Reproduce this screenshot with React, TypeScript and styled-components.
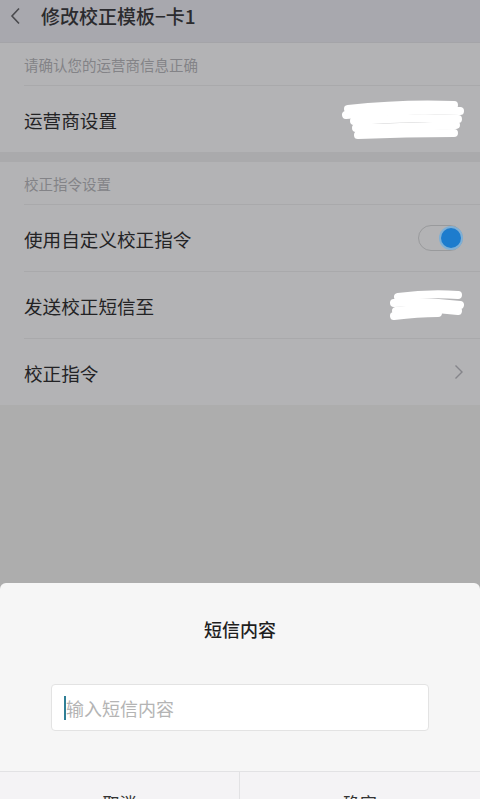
import React from 'react'
import styled, { createGlobalStyle } from 'styled-components'

const GlobalStyle = createGlobalStyle`
  html, body {
    margin: 0;
    padding: 0;
    background: #adadad;
  }
  body {
    font-family: "Noto Sans CJK SC", "Noto Sans", sans-serif;
  }
`

const Page = styled.div`
  width: 480px;
  height: 799px;
  overflow: hidden;
  display: flex;
  flex-direction: column;
  background: #adadad;
`

const Header = styled.header`
  height: 43px;
  flex-shrink: 0;
  display: flex;
  align-items: center;
  background: #a8a8ae;
  border-bottom: 1px solid #a4a4a8;
  box-sizing: border-box;
`

const Back = styled.div`
  width: 41px;
  height: 43px;
  display: flex;
  align-items: center;
  padding-left: 10px;
  box-sizing: border-box;
  margin-top: -10px;
`

const Title = styled.h1`
  margin: -10px 0 0 0;
  font-size: 19px;
  font-weight: 500;
  color: #2b2b2e;
  line-height: 24px;
`

const List = styled.div`
  flex-shrink: 0;
  background: #b3b3b5;
`

const SectionLabel = styled.div`
  height: 42px;
  padding-left: 24px;
  display: flex;
  align-items: center;
  font-size: 14.5px;
  color: #838387;
`

const Gap = styled.div`
  height: 10px;
  background: #aaaaac;
`

const Row = styled.div<{ $divider?: boolean }>`
  height: 66px;
  margin-left: 24px;
  padding-right: 16px;
  display: flex;
  align-items: center;
  justify-content: space-between;
  border-top: ${(p) => (p.$divider ? '1px solid #a9a9ab' : 'none')};
  font-size: 18.6px;
  color: #232325;
`

const Toggle = styled.div`
  width: 45px;
  height: 26px;
  border-radius: 13px;
  border: 1px solid #999a9c;
  box-sizing: border-box;
  display: flex;
  align-items: center;
  justify-content: flex-end;
  padding-right: 1px;
  margin-right: 1px;
`

const Knob = styled.div`
  width: 20px;
  height: 20px;
  border-radius: 50%;
  background: #1d7ccd;
  box-shadow: 0 0 0 2px #7fb0d6;
`

const Filler = styled.div`
  height: 178px;
  flex-shrink: 0;
  background: #adadad;
`

const Dialog = styled.div`
  flex-shrink: 0;
  background: #f6f6f6;
  border-radius: 6px 6px 0 0;
  display: flex;
  flex-direction: column;
  align-items: center;
`

const DialogTitle = styled.div`
  margin-top: 34px;
  font-size: 18px;
  line-height: 24px;
  font-weight: 500;
  color: #1e1e1e;
`

const InputBox = styled.div`
  margin-top: 43px;
  width: 378px;
  height: 47px;
  background: #ffffff;
  border: 1px solid #e3e3e3;
  border-radius: 4px;
  box-sizing: border-box;
  display: flex;
  align-items: center;
  padding-left: 12px;
`

const Caret = styled.span`
  width: 2px;
  height: 24px;
  background: #2f7f96;
`

const Placeholder = styled.span`
  font-size: 18px;
  color: #b4b4b4;
`

const Buttons = styled.div`
  margin-top: 40px;
  width: 100%;
  height: 60px;
  display: grid;
  grid-template-columns: 1fr 1fr;
  border-top: 1px solid #e2e2e4;
  background: #f4f3f5;
`

const Button = styled.div<{ $left?: boolean }>`
  display: flex;
  align-items: center;
  justify-content: center;
  font-size: 17px;
  color: #333;
  border-right: ${(p) => (p.$left ? '1px solid #e2e2e4' : 'none')};
`

const Scribble: React.FC<{ w: number; h: number; lines: string[] }> = ({ w, h, lines }) => (
  <svg width={w} height={h} viewBox={`0 0 ${w} ${h}`}>
    {lines.map((d, i) => (
      <path key={i} d={d} stroke="#ffffff" strokeWidth={8} strokeLinecap="round" fill="none" />
    ))}
  </svg>
)

const App: React.FC = () => {
  return (
    <Page>
      <GlobalStyle />
      <Header>
        <Back>
          <svg width="12" height="18" viewBox="0 0 12 18">
            <path d="M9 1.5 L2 9 L9 16.5" stroke="#4a4a4e" strokeWidth="1.6" fill="none" />
          </svg>
        </Back>
        <Title>修改校正模板−卡1</Title>
      </Header>
      <List>
        <SectionLabel>请确认您的运营商信息正确</SectionLabel>
        <Row $divider>
          运营商设置
          <Scribble
            w={122}
            h={44}
            lines={[
              'M6 12 Q60 6 112 8',
              'M4 18 Q70 12 118 14',
              'M12 24 Q66 20 116 22',
              'M14 31 Q70 30 114 28',
              'M16 38 Q64 36 112 36',
            ]}
          />
        </Row>
        <Gap />
        <SectionLabel>校正指令设置</SectionLabel>
        <Row $divider>
          使用自定义校正指令
          <Toggle>
            <Knob />
          </Toggle>
        </Row>
        <Row $divider>
          发送校正短信至
          <Scribble
            w={76}
            h={32}
            lines={['M10 8 Q40 4 70 6', 'M6 14 Q40 12 72 16', 'M8 22 Q38 18 70 22', 'M6 27 Q30 24 50 24']}
          />
        </Row>
        <Row $divider>
          校正指令
          <svg width="10" height="16" viewBox="0 0 10 16">
            <path d="M1.5 1.5 L8 8 L1.5 14.5" stroke="#85858a" strokeWidth="1.4" fill="none" />
          </svg>
        </Row>
      </List>
      <Filler />
      <Dialog>
        <DialogTitle>短信内容</DialogTitle>
        <InputBox>
          <Caret />
          <Placeholder>输入短信内容</Placeholder>
        </InputBox>
        <Buttons>
          <Button $left>取消</Button>
          <Button>确定</Button>
        </Buttons>
      </Dialog>
    </Page>
  )
}

export default App
